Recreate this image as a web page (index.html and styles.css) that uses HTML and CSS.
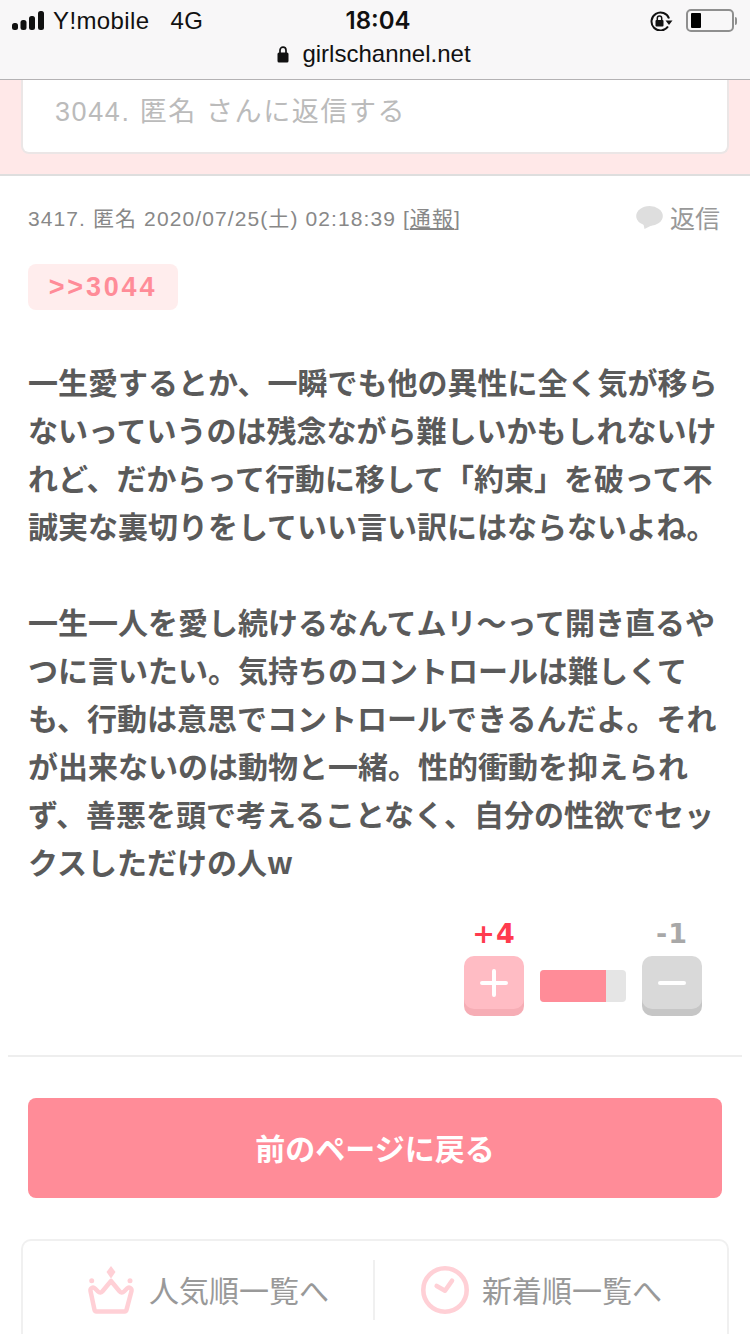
FILE: index.html
```html
<!DOCTYPE html>
<html lang="ja">

<head>
    <meta charset="utf-8">
    <meta name="viewport" content="width=device-width, initial-scale=1">
    <title>girlschannel.net</title>
    <link rel="stylesheet" href="styles.css">
</head>

<body>
    <!-- Browser chrome -->
    <header class="browser-bar">
        <div class="status-row">
            <div class="status-left">
                <svg class="signal" width="34" height="20" viewBox="0 0 34 20">
                    <rect x="0" y="12" width="6" height="7" rx="2.5" fill="#111"/>
                    <rect x="8.5" y="9" width="6" height="10" rx="2.5" fill="#111"/>
                    <rect x="17" y="5" width="6" height="14" rx="2.5" fill="#111"/>
                    <rect x="26" y="0" width="6" height="19" rx="2.5" fill="#111"/>
                </svg>
                <span class="carrier">Y!mobile</span>
                <span class="network">4G</span>
            </div>
            <div class="clock">18:04</div>
            <div class="status-right">
                <svg width="23" height="20" viewBox="0 0 23 20">
                    <path d="M18 15.500A9 9 0 1 1 19 7.500" fill="none" stroke="#111" stroke-width="2"/>
                    <path d="M15.500 9.500h7l-3.500 4.500z" fill="#111"/>
                    <rect x="5.500" y="9" width="8" height="6.500" rx="1" fill="#111"/>
                    <path d="M7.300 9.500V7.200a2.200 2.200 0 0 1 4.400 0V9.500" fill="none" stroke="#111" stroke-width="1.500"/>
                </svg>
                <div class="battery"><div class="battery-level"></div></div>
                <div class="battery-tip"></div>
            </div>
        </div>
        <div class="url-row">
            <svg width="12" height="17" viewBox="0 0 12 17">
                <rect x="0.5" y="6.5" width="11" height="10" rx="1.5" fill="#111"/>
                <path d="M3 7V4.2a3 3 0 0 1 6 0V7" fill="none" stroke="#111" stroke-width="1.7"/>
            </svg>
            <span>girlschannel.net</span>
        </div>
    </header>

    <!-- Reply box -->
    <section class="reply-area">
        <div class="reply-input">3044. 匿名 さんに返信する</div>
    </section>

    <!-- Comment -->
    <article class="comment">
        <div class="comment-meta">
            <p class="comment-info">3417. 匿名 2020/07/25(土) 02:18:39 [<u>通報</u>]</p>
            <div class="reply-link">
                <svg width="27" height="23" viewBox="0 0 27 23">
                    <ellipse cx="13.500" cy="10" rx="13.300" ry="10" fill="#dedede"/>
                    <path d="M7 16l1.500 7 8-4z" fill="#dedede"/>
                </svg>
                <span>返信</span>
            </div>
        </div>
        <div class="anchor">&gt;&gt;3044</div>
        <div class="comment-body">
            <p>一生愛するとか、一瞬でも他の異性に全く気が移らないっていうのは残念ながら難しいかもしれないけれど、だからって行動に移して「約束」を破って不誠実な裏切りをしていい言い訳にはならないよね。</p>
            <p>一生一人を愛し続けるなんてムリ〜って開き直るやつに言いたい。気持ちのコントロールは難しくても、行動は意思でコントロールできるんだよ。それが出来ないのは動物と一緒。性的衝動を抑えられず、善悪を頭で考えることなく、自分の性欲でセックスしただけの人w</p>
        </div>
        <div class="votes">
            <div class="vote">
                <span class="vote-count vote-count-plus">+4</span>
                <div class="vote-btn vote-btn-plus">
                    <svg width="28" height="28" viewBox="0 0 28 28">
                        <path d="M14 2v24M2 14h24" stroke="#fff" stroke-width="4" stroke-linecap="round"/>
                    </svg>
                </div>
            </div>
            <div class="vote-bar"><div class="vote-bar-fill"></div></div>
            <div class="vote">
                <span class="vote-count vote-count-minus">-1</span>
                <div class="vote-btn vote-btn-minus">
                    <svg width="28" height="28" viewBox="0 0 28 28">
                        <path d="M2 14h24" stroke="#fff" stroke-width="4" stroke-linecap="round"/>
                    </svg>
                </div>
            </div>
        </div>
    </article>

    <div class="back-wrap">
        <a class="back-btn">前のページに戻る</a>
    </div>

    <!-- List links -->
    <nav class="list-links">
        <a class="list-link list-link-popular">
            <svg width="48" height="48" viewBox="0 0 48 48">
                <path d="M24 0l4.500 6-4.500 6.500-4.500-6.500z" fill="#ffd0d6"/>
                <circle cx="4.700" cy="14.700" r="2.500" fill="#ffd0d6"/>
                <circle cx="43" cy="14.700" r="2.500" fill="#ffd0d6"/>
                <path d="M9.500 45.500h28a2 2 0 0 0 2-1.600L44.500 25c.5-3-2.500-4.500-4.500-2.500l-3 3c-1.500 1.500-3.500 1.200-4.500-.3L24 15l-8.500 10.200c-1 1.500-3 1.800-4.500.3l-3-3C6 20.500 3 22 3.500 25l4 18.900a2 2 0 0 0 2 1.600z" fill="none" stroke="#ffd0d6" stroke-width="4.500" stroke-linejoin="round"/>
            </svg>
            <span>人気順一覧へ</span>
        </a>
        <a class="list-link list-link-new">
            <svg width="48" height="48" viewBox="0 0 48 48">
                <circle cx="24" cy="24" r="21.700" fill="none" stroke="#ffd0d6" stroke-width="4.600"/>
                <path d="M15.700 20l8.300 4.700 7-10" fill="none" stroke="#ffd0d6" stroke-width="4.600" stroke-linecap="round" stroke-linejoin="round"/>
            </svg>
            <span>新着順一覧へ</span>
        </a>
    </nav>
</body>

</html>
```

FILE: styles.css
```css
html, body {
    margin: 0;
    height: 1334px;
    overflow: hidden;
    background-color: #fff;
}

body {
    font-family: "Liberation Sans", "Noto Sans CJK JP", sans-serif;
}

p {
    margin: 0;
}

/* Browser chrome */
.browser-bar {
    height: 79px;
    background-color: #f8f7f8;
    border-bottom: 1px solid #b4b2b4;
    color: #111;
}

.status-row {
    height: 41px;
    display: grid;
    grid-template-columns: 1fr auto 1fr;
    align-items: center;
    padding: 0 12px;
}

.status-left {
    display: flex;
    align-items: center;
    font-size: 24px;
    letter-spacing: 0.4px;
}

.signal {
    margin-right: 7px;
}

.network {
    margin-left: 21px;
}

.clock {
    font-family: Inter, sans-serif;
    font-weight: 600;
    font-size: 24px;
    margin-left: 6px;
}

.status-right {
    display: flex;
    align-items: center;
    justify-content: flex-end;
}

.battery {
    width: 39px;
    height: 15px;
    margin-left: 13px;
    padding: 2px 2px 2px 3px;
    border: 2px solid #8f8f8f;
    border-radius: 5px;
    display: flex;
}

.battery-level {
    width: 10px;
    background-color: #000;
    border-radius: 1px;
}

.battery-tip {
    width: 2px;
    height: 8px;
    margin-left: 1px;
    margin-right: 1px;
    background-color: #8f8f8f;
    border-radius: 0 3px 3px 0;
}

.url-row {
    display: flex;
    justify-content: center;
    align-items: center;
    gap: 13px;
    font-size: 24px;
    height: 26px;
    padding-right: 2px;
}

/* Reply box */
.reply-area {
    height: 96px;
    box-sizing: border-box;
    background-color: #ffe8e8;
    border-bottom: 2px solid #dedede;
    padding: 0 21px;
}

.reply-input {
    height: 74px;
    box-sizing: border-box;
    background-color: #fff;
    border: 2px solid #ebe6e6;
    border-top: 0;
    border-radius: 0 0 8px 8px;
    padding: 8px 32px 0;
    font-size: 27px;
    letter-spacing: 1.6px;
    line-height: 48px;
    color: #bbb;
}

/* Comment */
.comment {
    margin: 0 8px;
    padding: 0 20px;
    height: 881px;
    box-sizing: border-box;
    border-bottom: 2px solid #eee;
}

.comment-meta {
    display: flex;
    justify-content: space-between;
    align-items: center;
    height: 80px;
    box-sizing: border-box;
    padding-top: 2px;
    margin-right: 2px;
}

.comment-info {
    font-size: 21px;
    letter-spacing: 1.1px;
    color: #888;
}

.reply-link {
    display: flex;
    align-items: center;
    gap: 7px;
    font-size: 25px;
    color: #999;
}

.anchor {
    width: 150px;
    height: 46px;
    margin-top: 8px;
    background-color: #ffeded;
    border-radius: 8px;
    text-align: center;
    font-weight: bold;
    font-size: 27px;
    letter-spacing: 2.8px;
    line-height: 46px;
    color: #ff8c98;
}

.comment-body {
    margin-top: 47px;
    margin-right: -6px;
    font-family: "Noto Sans CJK JP", sans-serif;
    font-size: 30px;
    font-weight: 700;
    line-height: 48px;
    color: #5a5a5a;
}

.comment-body p + p {
    margin-top: 48px;
}

.votes {
    display: flex;
    justify-content: flex-end;
    align-items: flex-end;
    margin-top: 27px;
    padding-right: 20px;
}

.vote {
    width: 60px;
    display: flex;
    flex-direction: column;
    align-items: center;
}

.vote-count {
    font-family: "DejaVu Sans", sans-serif;
    font-weight: bold;
    font-size: 27px;
    letter-spacing: 1px;
    line-height: 44px;
}

.vote-count-plus {
    color: #ff3b4e;
}

.vote-count-minus {
    color: #a8a8a8;
}

/* the lower edge of the button is its shadow */
.vote-btn {
    width: 60px;
    height: 53px;
    margin-bottom: 7px;
    border-radius: 10px;
    display: flex;
    justify-content: center;
    align-items: center;
}

.vote-btn-plus {
    background-color: #ffbcc4;
    box-shadow: 0 7px 0 #f6adb5;
}

.vote-btn-minus {
    background-color: #d9d9d9;
    box-shadow: 0 7px 0 #c6c6c6;
}

.vote-bar {
    width: 86px;
    height: 32px;
    margin: 0 16px 14px;
    background-color: #e5e5e5;
    border-radius: 4px;
    overflow: hidden;
}

.vote-bar-fill {
    width: 66px;
    height: 100%;
    background-color: #ff8c98;
}

/* Back button */
.back-wrap {
    padding: 41px 28px;
}

.back-btn {
    display: block;
    height: 100px;
    background-color: #ff8c98;
    border-radius: 8px;
    text-align: center;
    color: #fff;
    font-family: "Noto Sans CJK JP", sans-serif;
    font-size: 30px;
    font-weight: 700;
    line-height: 98px;
}

/* List links */
.list-links {
    display: flex;
    margin: 0 21px;
    height: 110px;
    box-sizing: border-box;
    border: 2px solid #f0f0f0;
    border-bottom: 0;
    border-radius: 10px 10px 0 0;
    padding-top: 19px;
}

.list-link {
    height: 60px;
    box-sizing: border-box;
    display: flex;
    align-items: center;
    gap: 14px;
    font-family: "Noto Sans CJK JP", sans-serif;
    font-size: 30px;
    color: #999;
}

.list-link span {
    margin-top: -2px;
}

.list-link-popular {
    flex: 0 0 350px;
    justify-content: flex-end;
    padding-right: 44px;
}

.list-link-new {
    flex: 1;
    gap: 13px;
    padding-left: 46px;
    border-left: 2px solid #f0f0f0;
}
```
